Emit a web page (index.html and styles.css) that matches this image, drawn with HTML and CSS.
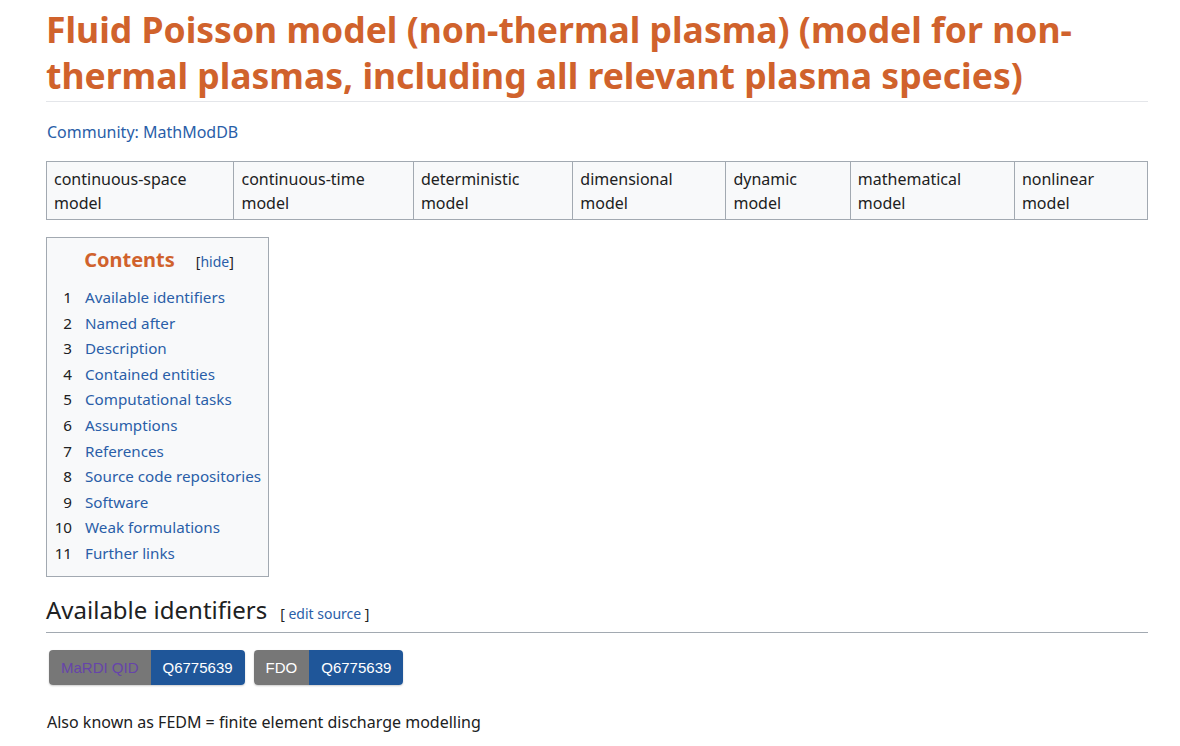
FILE: index.html
```html
<!DOCTYPE html>
<html>
<head>
<meta charset="utf-8">
<link rel="stylesheet" href="styles.css">
</head>
<body>
<div class="page">
  <h1 class="title">Fluid Poisson model (non-thermal plasma) (model for non-thermal plasmas, including all relevant plasma species)</h1>
  <p class="community"><a href="#">Community: MathModDB</a></p>
  <table class="tags">
    <tr>
      <td>continuous-space model</td>
      <td>continuous-time model</td>
      <td>deterministic model</td>
      <td>dimensional model</td>
      <td>dynamic model</td>
      <td>mathematical model</td>
      <td>nonlinear model</td>
    </tr>
  </table>
  <div class="toc">
    <div class="toc-head"><span class="toc-title">Contents</span><span class="toc-toggle">[<a href="#">hide</a>]</span></div>
    <ul class="toc-list">
      <li><span class="num">1</span><a href="#">Available identifiers</a></li>
      <li><span class="num">2</span><a href="#">Named after</a></li>
      <li><span class="num">3</span><a href="#">Description</a></li>
      <li><span class="num">4</span><a href="#">Contained entities</a></li>
      <li><span class="num">5</span><a href="#">Computational tasks</a></li>
      <li><span class="num">6</span><a href="#">Assumptions</a></li>
      <li><span class="num">7</span><a href="#">References</a></li>
      <li><span class="num">8</span><a href="#">Source code repositories</a></li>
      <li><span class="num">9</span><a href="#">Software</a></li>
      <li><span class="num">10</span><a href="#">Weak formulations</a></li>
      <li><span class="num">11</span><a href="#">Further links</a></li>
    </ul>
  </div>
  <h2 class="section"><span class="section-title">Available identifiers</span><span class="edit">[ <a href="#">edit source</a> ]</span></h2>
  <div class="badges">
    <span class="badge"><span class="badge-key mardi">MaRDI QID</span><span class="badge-val">Q6775639</span></span>
    <span class="badge"><span class="badge-key">FDO</span><span class="badge-val">Q6775639</span></span>
  </div>
  <p class="aka">Also known as FEDM = finite element discharge modelling</p>
</div>
</body>
</html>
```
FILE: styles.css
```css
html, body {
  margin: 0;
  padding: 0;
  background: #fff;
}
body {
  font-family: "Noto Sans", "Open Sans", sans-serif;
  color: #202122;
  font-size: 16px;
}
a {
  color: #2a5ea8;
  text-decoration: none;
}
.page {
  width: 1102px;
  margin-left: 46px;
  padding-top: 6px;
}
.title {
  margin: 0;
  font-size: 35.5px;
  line-height: 46px;
  font-weight: 700;
  color: #d0622c;
  padding-bottom: 3px;
  border-bottom: 1px solid #e4e6ea;
}
.community {
  margin: 18px 0 0 1px;
  line-height: 24px;
}
.tags {
  margin-top: 17px;
  width: 100%;
  border-collapse: collapse;
  background: #f8f9fa;
  border: 1px solid #a2a9b1;
}
.tags td {
  border: 1px solid #a2a9b1;
  padding: 5px 8px 4px 7px;
  line-height: 24px;
  vertical-align: top;
  font-size: 16px;
}
.toc {
  margin-top: 17px;
  width: fit-content;
  border: 1px solid #a2a9b1;
  background: #f8f9fa;
  padding: 8px 7px 9px 0;
}
.toc-head {
  display: flex;
  align-items: baseline;
  justify-content: center;
  gap: 21px;
  padding-left: 10px;
}
.toc-title {
  font-size: 20px;
  font-weight: 700;
  color: #d0622c;
}
.toc-toggle {
  font-size: 14px;
}
.toc-list {
  list-style: none;
  margin: 12px 0 0 0;
  padding: 0;
}
.toc-list li {
  display: flex;
  line-height: 25.6px;
  font-size: 15.2px;
  white-space: nowrap;
}
.num {
  width: 25px;
  text-align: right;
  padding-right: 13px;
  flex: none;
}
.section {
  margin: 17px 0 0 0;
  font-weight: 400;
  display: flex;
  align-items: baseline;
  border-bottom: 1px solid #a2a9b1;
  padding-bottom: 6px;
}
.section-title {
  font-size: 24px;
  line-height: 32px;
}
.edit {
  font-size: 14px;
  margin-left: 13px;
}
.badges {
  margin-top: 17px;
  display: flex;
  gap: 9px;
  padding-left: 3px;
}
.badge {
  display: inline-flex;
  height: 35px;
  border-radius: 4px;
  overflow: hidden;
  box-shadow: 0 1px 2px rgba(0,0,0,0.2);
  font-family: "Liberation Sans", Arial, sans-serif;
  font-size: 15px;
}
.badge-key, .badge-val {
  display: flex;
  align-items: center;
  padding: 0 12px;
  color: #fff;
}
.badge-key {
  background: #777777;
}
.badge-key.mardi {
  color: #6644aa;
}
.badge-val {
  background: #1f5699;
}
.aka {
  margin: 25px 0 0 1px;
  line-height: 24px;
}
```
